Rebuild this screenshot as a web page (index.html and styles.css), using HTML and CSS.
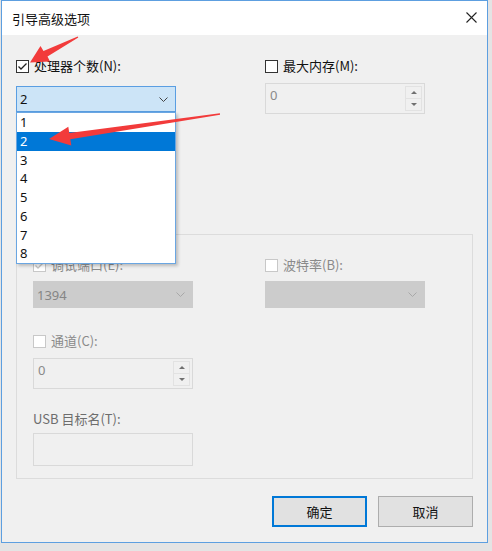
FILE: index.html
```html
<!DOCTYPE html>
<html lang="zh-CN">
<head>
    <meta charset="UTF-8">
    <title>引导高级选项</title>
    <link rel="stylesheet" href="styles.css">
</head>
<body>
    <div class="window">
        <div class="titlebar">
            <span class="title">引导高级选项</span>
            <svg class="close" width="11" height="11" viewBox="0 0 11 11">
                <path d="M0.5 0.5 L10.5 10.5 M10.5 0.5 L0.5 10.5" stroke="#222" stroke-width="1.1" fill="none"/>
            </svg>
        </div>

        <div class="client">
            <div class="top-row">
                <div class="col">
                    <label class="check">
                        <span class="box checked">
                            <svg width="11" height="11" viewBox="0 0 11 11"><polyline points="1.5,5.5 4,8 9.5,2.5" stroke="#222" stroke-width="1.3" fill="none"/></svg>
                        </span>
                        处理器个数(N):
                    </label>
                    <div class="combo open">
                        <span class="value">2</span>
                        <svg class="chev" width="9" height="5" viewBox="0 0 9 5"><polyline points="0.5,0.5 4.5,4.5 8.5,0.5" stroke="#444" stroke-width="1" fill="none"/></svg>
                        <ul class="list">
                            <li>1</li>
                            <li class="selected">2</li>
                            <li>3</li>
                            <li>4</li>
                            <li>5</li>
                            <li>6</li>
                            <li>7</li>
                            <li>8</li>
                        </ul>
                    </div>
                </div>
                <div class="col">
                    <label class="check">
                        <span class="box"></span>
                        最大内存(M):
                    </label>
                    <div class="spinner top-spinner">
                        <span class="value">0</span>
                        <span class="spin">
                            <span class="up"></span>
                            <span class="down"></span>
                        </span>
                    </div>
                </div>
            </div>

            <div class="group">
                <div class="group-grid">
                    <div class="col">
                        <label class="check disabled">
                            <span class="box checked">
                                <svg width="11" height="11" viewBox="0 0 11 11"><polyline points="1.5,5.5 4,8 9.5,2.5" stroke="#c4c4c4" stroke-width="1.3" fill="none"/></svg>
                            </span>
                            调试端口(E):
                        </label>
                        <div class="combo disabled">
                            <span class="value">1394</span>
                            <svg class="chev" width="9" height="5" viewBox="0 0 9 5"><polyline points="0.5,0.5 4.5,4.5 8.5,0.5" stroke="#a8a8a8" stroke-width="1" fill="none"/></svg>
                        </div>

                        <label class="check disabled channel">
                            <span class="box"></span>
                            通道(C):
                        </label>
                        <div class="spinner">
                            <span class="value">0</span>
                            <span class="spin">
                                <span class="up"></span>
                                <span class="down"></span>
                            </span>
                        </div>

                        <div class="field-label">USB 目标名(T):</div>
                        <div class="textbox"></div>
                    </div>
                    <div class="col">
                        <label class="check disabled">
                            <span class="box"></span>
                            波特率(B):
                        </label>
                        <div class="combo disabled">
                            <span class="value"></span>
                            <svg class="chev" width="9" height="5" viewBox="0 0 9 5"><polyline points="0.5,0.5 4.5,4.5 8.5,0.5" stroke="#a8a8a8" stroke-width="1" fill="none"/></svg>
                        </div>
                    </div>
                </div>
            </div>

            <div class="buttons">
                <button class="btn default">确定</button>
                <button class="btn">取消</button>
            </div>
        </div>
    </div>

    <!-- red annotation arrows -->
    <svg class="arrows" width="492" height="551" viewBox="0 0 492 551">
        <polygon fill="#f23b3b" points="78.3,37.5 47.5,56.5 50,61.5 30,62.5 40.5,46 43.5,51 77.7,36.5"/>
        <polygon fill="#f23b3b" points="220.1,114.8 70.3,139.3 71.3,145.4 49,139 68.3,126.8 69.3,133 219.9,113.2"/>
    </svg>
</body>
</html>
```

FILE: styles.css
```css
body {
    margin: 0;
    width: 492px;
    height: 551px;
    overflow: hidden;
    position: relative;
    background: #e4e4e4;
    font-family: "Noto Sans", "Noto Sans CJK SC", sans-serif;
    font-size: 13px;
    color: #000;
}

.window {
    margin-left: 1px;
    width: 485px;
    height: 541px;
    border: 1px solid #5d9fe0;
    background: #f0f0f0;
}

.titlebar {
    height: 34px;
    background: #fff;
    display: flex;
    align-items: center;
    justify-content: space-between;
    padding: 0 10px 0 10px;
}

.title {
    font-family: "Noto Sans CJK SC", sans-serif;
    font-size: 13px;
    color: #111;
}

.close {
    margin-top: -1px;
}

.client {
    padding: 0 14px;
}

.top-row {
    display: grid;
    grid-template-columns: 249px 160px;
    padding-top: 23px;
}

.check {
    display: flex;
    align-items: center;
    gap: 5px;
    height: 16px;
    line-height: 16px;
    font-family: "Noto Sans CJK SC", sans-serif;
    font-size: 13px;
    color: #111;
}

.box {
    width: 13px;
    height: 13px;
    box-sizing: border-box;
    border: 1px solid #333;
    background: #fff;
    display: flex;
    align-items: center;
    justify-content: center;
}

.check.disabled {
    color: #8a8a8a;
}

.check.disabled .box {
    border-color: #c8c8c8;
}

.combo {
    position: relative;
    width: 160px;
    height: 26px;
    box-sizing: border-box;
    border: 1px solid #5a9ee2;
    background: #cce4f7;
    margin-top: 12px;
    display: flex;
    align-items: center;
    justify-content: space-between;
    padding: 0 7px 0 3px;
}

.combo .value {
    font-size: 13px;
    color: #111;
}

.combo.disabled {
    height: 27px;
    margin-top: 8px;
    border-color: #cccccc;
    background: #cccccc;
}

.combo.disabled .value {
    color: #858585;
}

.list {
    position: absolute;
    left: -1px;
    top: 25px;
    width: 160px;
    box-sizing: border-box;
    margin: 0;
    padding: 0;
    list-style: none;
    background: #fff;
    border: 1px solid #6aa6e2;
    box-shadow: 2px 2px 3px rgba(0, 0, 0, 0.22);
    z-index: 2;
}

.list li {
    height: 18.75px;
    line-height: 18.75px;
    padding-left: 3px;
    font-size: 13px;
    color: #111;
}

.list li.selected {
    background: #0078d7;
    color: #fff;
}

.spinner {
    width: 160px;
    height: 31px;
    box-sizing: border-box;
    border: 1px solid #d9d9d9;
    background: #f0f0f0;
    margin-top: 9px;
    display: flex;
    align-items: center;
    justify-content: space-between;
    padding: 2px 2px 2px 4px;
}

.top-spinner {
    margin-top: 9px;
}

.spinner .value {
    color: #8a8a8a;
    font-size: 13px;
    margin-top: -8px;
}

.spin {
    width: 17px;
    height: 100%;
    box-sizing: border-box;
    border: 1px solid #e2e2e2;
    display: flex;
    flex-direction: column;
}

.spin .up,
.spin .down {
    flex: 1;
    display: flex;
    align-items: center;
    justify-content: center;
}

.spin .up {
    border-bottom: 1px solid #e2e2e2;
}

.spin .up::after {
    content: "";
    border-left: 3px solid transparent;
    border-right: 3px solid transparent;
    border-bottom: 3px solid #707070;
}

.spin .down::after {
    content: "";
    border-left: 3px solid transparent;
    border-right: 3px solid transparent;
    border-top: 3px solid #707070;
}

.group {
    margin-top: 120px;
    height: 245px;
    box-sizing: border-box;
    border: 1px solid #dcdcdc;
    padding: 22px 0 0 16px;
}

.group-grid {
    display: grid;
    grid-template-columns: 232px 160px;
}

.check.channel {
    margin-top: 25px;
}

.field-label {
    margin-top: 22px;
    height: 16px;
    line-height: 16px;
    font-family: "Noto Sans CJK SC", sans-serif;
    color: #6d6d6d;
}

.textbox {
    margin-top: 6px;
    width: 160px;
    height: 33px;
    box-sizing: border-box;
    border: 1px solid #d9d9d9;
    background: #f0f0f0;
}

.buttons {
    display: flex;
    justify-content: flex-end;
    gap: 11px;
    margin-top: 17px;
}

.btn {
    width: 95px;
    height: 31px;
    box-sizing: border-box;
    border: 1px solid #adadad;
    background: #e1e1e1;
    font-family: "Noto Sans CJK SC", sans-serif;
    font-size: 13px;
    color: #111;
    padding: 0;
}

.btn.default {
    border: 2px solid #0078d7;
}

.arrows {
    position: absolute;
    left: 0;
    top: 0;
    z-index: 5;
    pointer-events: none;
}
```
